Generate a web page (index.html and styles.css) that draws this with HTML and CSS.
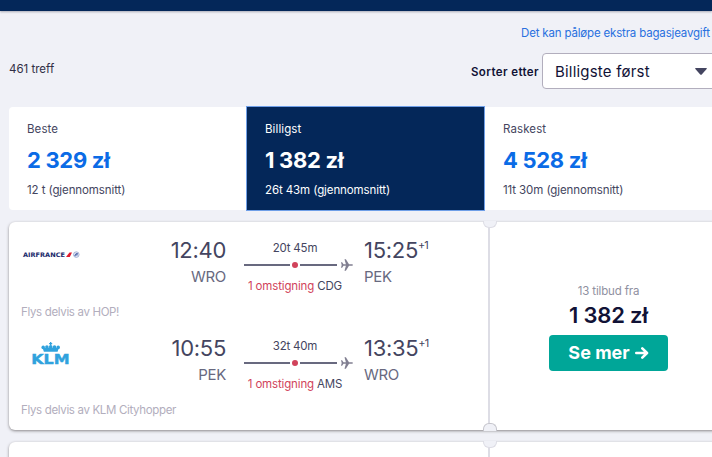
FILE: index.html
```html
<!DOCTYPE html>
<html lang="nb">
<head>
<meta charset="utf-8">
<title>Flyreiser</title>
<link rel="stylesheet" href="styles.css">
</head>
<body>
<svg class="defs" width="0" height="0" aria-hidden="true">
  <symbol id="plane" viewBox="0 0 12 12"><path d="M0 3.2h1.1l1.4 2h2.4L3.5.2h1.4l3.1 5h2.6c1.8 0 1.8 1.6 0 1.6H8l-3.1 5H3.5l1.4-5H2.5l-1.4 2H0l.7-2.8z"/></symbol>
</svg>
<header class="topbar"></header>
<main class="page">
  <a class="baggage">Det kan påløpe ekstra bagasjeavgift</a>
  <div class="toolbar">
    <span class="count">461 treff</span>
    <div class="sort">
      <span class="sort-label">Sorter etter</span>
      <div class="select"><span class="select-text">Billigste først</span><svg class="caret" viewBox="0 0 12 7"><path d="M.8 0h10.4q1.2 0 .4 1L7 6.3q-1 1-2 0L.4 1Q-.4 0 .8 0z"/></svg></div>
    </div>
  </div>
  <nav class="tabs">
    <div class="tab"><span class="tab-name">Beste</span><span class="tab-price">2 329 zł</span><span class="tab-time">12 t (gjennomsnitt)</span></div>
    <div class="tab active"><span class="tab-name">Billigst</span><span class="tab-price">1 382 zł</span><span class="tab-time">26t 43m (gjennomsnitt)</span></div>
    <div class="tab"><span class="tab-name">Raskest</span><span class="tab-price">4 528 zł</span><span class="tab-time">11t 30m (gjennomsnitt)</span></div>
  </nav>
  <article class="ticket">
    <section class="legs">
      <div class="leg">
        <div class="logo">
          <svg class="airfrance" viewBox="0 0 58 8"><text transform="scale(1.2 1)" x="0" y="6.9" textLength="35" lengthAdjust="spacingAndGlyphs">AIRFRANCE</text><path fill="#e21b2c" d="M43 6.9 46.5 2.4H49L46.8 6.9z"/><circle cx="53.3" cy="4.6" r="2.8" fill="#e4e9f5" stroke="#8d9cc8" stroke-width=".7"/><path d="M51.5 5.8c1-2 2-2.3 3.5-2.3M52.6 6.2l.9-3.1M52 4.8h3" fill="none" stroke="#4b65aa" stroke-width=".8"/></svg>
        </div>
        <div class="depart"><span class="time">12:40</span><span class="airport">WRO</span></div>
        <div class="route"><span class="duration">20t 45m</span><div class="track"><i class="line"></i><i class="dot"></i><i class="line end"></i><svg class="plane"><use href="#plane"/></svg></div><span class="stops"><b>1 omstigning</b> CDG</span></div>
        <div class="arrive"><span class="time">15:25<sup>+1</sup></span><span class="airport">PEK</span></div>
        <p class="operator">Flys delvis av HOP!</p>
      </div>
      <div class="leg">
        <div class="logo">
          <svg class="klm" viewBox="0 0 38 22"><g fill="#30a2dd"><path d="M17.1 1h.9V.1h1.3V1h.9v1.2h-.9v1H18v-1h-.9z"/><circle cx="11.2" cy="5.4" r="1.8"/><circle cx="14.9" cy="5" r="1.8"/><circle cx="18.7" cy="4.9" r="1.8"/><circle cx="22.5" cy="5" r="1.8"/><circle cx="26.2" cy="5.4" r="1.8"/><path d="M10.7 6.2q8-1.3 16 0L25.6 9.8H11.9z"/></g><text x="-.8" y="21.7" textLength="38.5" lengthAdjust="spacingAndGlyphs">KLM</text></svg>
        </div>
        <div class="depart"><span class="time">10:55</span><span class="airport">PEK</span></div>
        <div class="route"><span class="duration">32t 40m</span><div class="track"><i class="line"></i><i class="dot"></i><i class="line end"></i><svg class="plane"><use href="#plane"/></svg></div><span class="stops"><b>1 omstigning</b> AMS</span></div>
        <div class="arrive"><span class="time">13:35<sup>+1</sup></span><span class="airport">WRO</span></div>
        <p class="operator">Flys delvis av KLM Cityhopper</p>
      </div>
    </section>
    <div class="perforation"></div>
    <section class="offer">
      <span class="deals">13 tilbud fra</span>
      <span class="price">1 382 zł</span>
      <a class="button"><span>Se mer</span><svg viewBox="0 0 14 12"><path d="M1.3 6h10.5M7.3 1.4 12 6l-4.7 4.6"/></svg></a>
    </section>
  </article>
  <article class="ticket next"><section class="legs"></section><div class="perforation"></div><section class="offer"></section></article>
</main>
</body>
</html>
```
FILE: styles.css
```css
* { box-sizing: border-box; }
html, body { height: 100%; overflow: hidden; }
body { margin: 0; background: #f0f1f7; color: #444560; font: 12px/16px Inter, "Liberation Sans", sans-serif; }
.defs { display: block; height: 0; }
span { white-space: nowrap; }
.topbar { height: 11px; background: #042759; box-shadow: 0 1px 2px rgba(40, 40, 60, .35); }
.page { width: 718px; height: 446px; overflow: hidden; padding-left: 9px; display: flex; flex-direction: column; }
.baggage { margin: 14px 0 0 512px; height: 16px; flex: none; white-space: nowrap; color: #2970df; font-size: 11.5px; letter-spacing: -.17px; }
.toolbar { height: 36px; flex: none; margin-top: 12px; display: flex; justify-content: space-between; }
.count { padding-top: 8px; color: #302e45; font-size: 11.5px; }
.sort { display: flex; align-items: center; gap: 3px; }
.sort-label { padding-top: 2px; color: #111236; font-weight: 600; font-size: 11.5px; letter-spacing: .4px; }
.select { width: 176px; height: 36px; border: 1px solid #b2aebd; border-radius: 4px; background: #fff; display: flex; align-items: center; padding-left: 12px; color: #111236; font-size: 15px; letter-spacing: .2px; }
.select-text { width: 140px; padding-top: 1px; }
.caret { width: 12px; height: 7px; fill: #444560; flex: none; }
.tabs { width: 714px; height: 103px; flex: none; margin-top: 18px; display: grid; grid-template-columns: repeat(3, 238px); background: #fff; border-radius: 4px; }
.tab { padding: 14px 18px 0; display: flex; flex-direction: column; font-size: 11.5px; }
.tab-price { margin: 9px 0 8px; line-height: 28px; font-size: 22px; font-weight: 700; letter-spacing: -.3px; color: #0b6be6; }
.tab-name { letter-spacing: .1px; }
.tab-time { letter-spacing: -.1px; }
.active { background: #042759; color: #fff; box-shadow: 0 0 0 1px #6f9fe8; margin-right: 1px; }
.active .tab-price { color: #fff; }
.ticket { width: 718px; height: 208px; margin-top: 12px; display: flex; flex: none; background: #fff; border-radius: 6px; box-shadow: 0 1px 3px rgba(37, 32, 31, .5); }
.next { height: 24px; border-radius: 6px 6px 0 0; }
.next .perforation::after { display: none; }
.legs { width: 479px; padding-top: 14px; }
.leg { height: 98px; display: grid; grid-template-columns: 161px 56px 129px 133px; grid-template-rows: 66px 20px; }
.logo { padding: 14px 0 0 14px; }
.airfrance { display: block; width: 58px; height: 8px; overflow: visible; }
.airfrance text { font: bold 6.2px "DejaVu Sans", sans-serif; fill: #20296b; }
.klm { display: block; width: 38px; height: 22px; margin: -6px 0 0 9px; overflow: visible; }
.klm text { font: bold 13.2px "DejaVu Sans", sans-serif; fill: #30a2dd; stroke: #30a2dd; stroke-width: .4px; }
.depart, .arrive, .route { display: flex; flex-direction: column; }
.depart { align-items: flex-end; }
.arrive { padding-left: 9px; }
.time { line-height: 28px; font-size: 22px; letter-spacing: -.3px; }
.time sup { font-size: 11px; line-height: 0; vertical-align: 9px; letter-spacing: -.9px; }
.airport { margin-top: 2px; line-height: 22px; font-size: 15px; letter-spacing: -.3px; color: #68697f; }
.route { padding-left: 18px; }
.duration { margin-top: 4px; width: 102px; text-align: center; font-size: 11.5px; letter-spacing: -.2px; }
.track { height: 12px; margin-top: 3px; display: flex; align-items: center; }
.line { width: 46px; height: 2px; flex: none; background: #68697f; }
.dot { width: 6px; height: 6px; flex: none; margin: 0 2px; border-radius: 50%; background: #d1435b; }
.line.end { width: 37px; }
.plane { width: 12px; height: 12px; flex: none; margin-left: 4px; fill: #817f91; }
.stops { margin-top: 7px; width: 102px; display: flex; gap: 3px; justify-content: center; font-size: 11.5px; letter-spacing: -.15px; }
.stops b { color: #d1435b; font-weight: 400; }
.operator { grid-column: 1 / -1; margin: 2px 0 0 12px; color: #b2aebd; font-size: 11.5px; letter-spacing: -.34px; }
.perforation { position: relative; width: 2px; background: #dddde5; }
.perforation::before, .perforation::after { content: ""; position: absolute; left: -5px; width: 12px; height: 6px; background: #f0f1f7; border: 1px solid #dddde5; }
.perforation::before { top: -1px; border-top: 0; border-radius: 0 0 6px 6px; }
.perforation::after { bottom: -1px; height: 7px; border-color: #c5c5cc; border-bottom: 0; border-radius: 6px 6px 0 0; }
.offer { width: 237px; padding-top: 61px; display: flex; flex-direction: column; align-items: center; }
.deals { color: #8f90a0; font-size: 11.5px; letter-spacing: -.15px; }
.price { margin-top: 2px; line-height: 28px; font-size: 22px; font-weight: 600; letter-spacing: -.2px; color: #111236; }
.button { width: 119px; height: 36px; margin-top: 6px; border-radius: 4px; background: #00a698; color: #fff; font-size: 18px; font-weight: 700; display: flex; align-items: center; justify-content: center; gap: 5px; }
.button svg { width: 14px; height: 12px; fill: none; stroke: #fff; stroke-width: 2.6; stroke-linecap: round; stroke-linejoin: round; }
```
